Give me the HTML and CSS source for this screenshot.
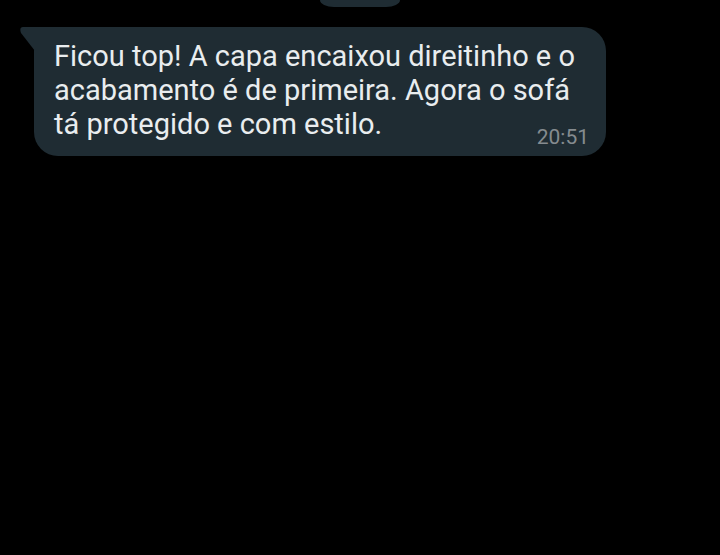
FILE: index.html
```html
<!DOCTYPE html>
<html lang="pt-BR">
<head>
<meta charset="utf-8">
<meta name="viewport" content="width=device-width, initial-scale=1">
<title>Conversa</title>
<link rel="stylesheet" href="styles.css">
</head>
<body>
<main class="chat">
  <div class="date-chip"></div>
  <article class="message">
    <svg class="tail" viewBox="0 0 15 24" aria-hidden="true"><path d="M3 0H15V24L1 6Q-1 0 3 0Z"/></svg>
    <p class="text">Ficou top! A capa encaixou direitinho e o acabamento é de primeira. Agora o sofá tá protegido e com estilo. <time class="time" datetime="20:51">20:51</time></p>
  </article>
</main>
</body>
</html>
```
FILE: styles.css
```css
* {
  box-sizing: border-box;
}

body {
  margin: 0;
  background: #000;
  font-family: Roboto, "Liberation Sans", sans-serif;
}

.chat {
  display: flex;
  flex-direction: column;
  gap: 20px;
  min-height: 100vh;
  padding: 0 34px;
}

.date-chip {
  align-self: center;
  width: 80px;
  height: 7px;
  border-radius: 0 0 14px 14px / 0 0 7px 7px;
  background: #1f2c33;
}

.message {
  position: relative;
  align-self: flex-start;
  max-width: 572px;
  padding: 12px 17px 15px 20px;
  border-radius: 0 24px 24px 24px;
  background: #1f2c33;
}

.tail {
  position: absolute;
  top: 0;
  left: -14px;
  width: 15px;
  height: 24px;
  fill: #1f2c33;
}

.text {
  margin: 0;
  color: #e9edef;
  font-size: 29px;
  line-height: 34px;
}

.time {
  float: right;
  margin-top: 17px;
  margin-bottom: -9px;
  color: #858b8f;
  font-size: 21px;
  line-height: 26px;
}
```
